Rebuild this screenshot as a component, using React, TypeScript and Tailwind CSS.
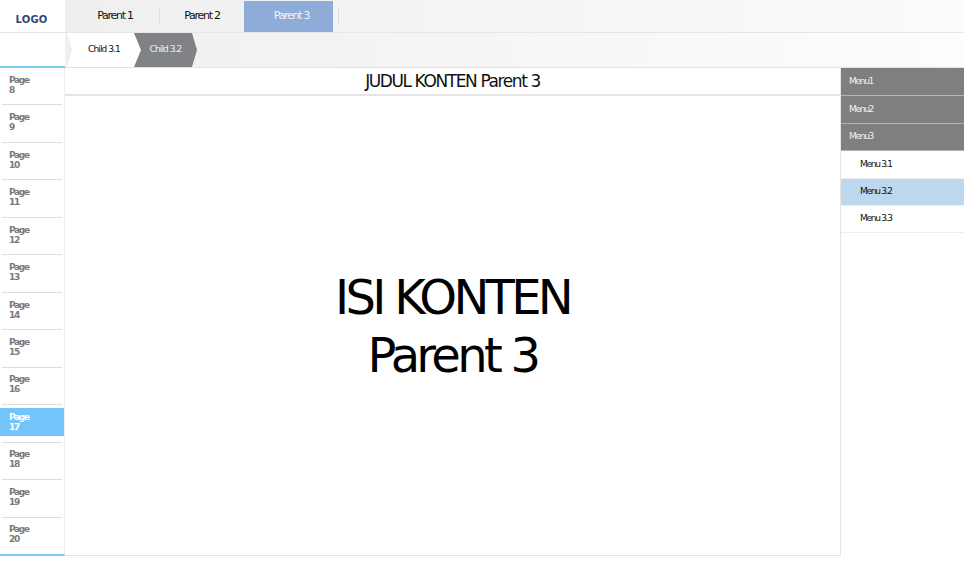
import React from 'react';

const pages = [8, 9, 10, 11, 12, 13, 14, 15, 16, 17, 18, 19, 20];
const activePage = 17;

const menus = [
  { label: 'Menu1', kind: 'top', h: 'h-[28px]' },
  { label: 'Menu2', kind: 'top', h: 'h-[28px]' },
  { label: 'Menu3', kind: 'top', h: 'h-[27px]' },
  { label: 'Menu 3.1', kind: 'sub', h: 'h-[28px]' },
  { label: 'Menu 3.2', kind: 'active', h: 'h-[27px]' },
  { label: 'Menu 3.3', kind: 'sub', h: 'h-[27px]' },
];

const Header: React.FC = () => (
  <>
    <div className="flex h-[33px] border-b border-[#e6e6e6]">
      <div className="w-[65px] bg-white flex items-center justify-center pt-[6px] pr-[2px] text-[10px] font-bold text-[#2b4a7b] tracking-[0.02em]">
        LOGO
      </div>
      <div className="flex-1 flex items-stretch pl-[6px] pt-[1px] bg-linear-to-r from-[#efefef] to-[#fbfbfb] text-[11px]">
        <div className="w-[88px] flex items-center justify-center text-[#111]">Parent 1</div>
        <div className="w-[1px] h-[17px] self-center bg-[#dddddd]" />
        <div className="w-[84px] flex items-center justify-center text-[#111]">Parent 2</div>
        <div className="w-[89px] flex items-center justify-center bg-[#8dacd8] text-[#f4f4f4] pl-[6px]">Parent 3</div>
        <div className="w-[1px] h-[17px] self-center bg-[#dddddd] ml-[5px]" />
      </div>
    </div>
    <div className="flex h-[35px]">
      <div className="w-[65px] bg-white border-b-2 border-[#7cc8f8]" />
      <div className="flex-1 flex bg-linear-to-r from-[#efefef] to-[#fdfdfd] border-b border-[#e2e2e2] pl-[2px] text-[9px] tracking-[-0.9px]">
        <div className="w-[74px] h-full bg-white flex items-center justify-center text-[#111] [clip-path:polygon(0_0,67px_0,74px_50%,67px_100%,0_100%,5px_50%)]">
          Child 3.1
        </div>
        <div className="w-[63px] -ml-[7px] h-full bg-[#818286] flex items-center justify-center text-[#f0f0f0] [clip-path:polygon(0_0,58px_0,63px_50%,58px_100%,0_100%,7px_50%)]">
          Child 3.2
        </div>
      </div>
    </div>
  </>
);

const LeftNav: React.FC = () => (
  <div className="w-[65px] flex flex-col border-r border-[#ececec] border-b-2 border-b-[#7cc8f8]">
    {pages.map((p, i) => (
      <React.Fragment key={p}>
        <div className="flex-1 flex items-center">
          <div
            className={
              'w-full h-[28px] mb-[3px] flex flex-col justify-center pl-[9px] text-[9px] leading-[10px] font-bold ' +
              (p === activePage ? 'bg-[#74c4fc] text-white' : 'text-[#7a7a7a]')
            }
          >
            <span>Page</span>
            <span>{p}</span>
          </div>
        </div>
        {i < pages.length - 1 && <div className="h-[1px] mx-[2px] bg-[#dcdcdc]" />}
      </React.Fragment>
    ))}
  </div>
);

const RightNav: React.FC = () => (
  <div className="w-[124px] flex flex-col border-l border-[#e6e6e6] text-[9px]">
    {menus.map((m) => (
      <div
        key={m.label}
        className={
          m.h +
          ' flex items-center border-b ' +
          (m.kind === 'top'
            ? 'bg-[#7f7f7f] text-[#f2f2f2] pl-[8px] border-[#b4b4b4]'
            : m.kind === 'active'
              ? 'bg-[#bdd7ee] text-[#111] pl-[19px] border-[#eeeeee]'
              : 'bg-white text-[#111] pl-[19px] border-[#eeeeee]')
        }
      >
        {m.label}
      </div>
    ))}
  </div>
);

export default function App() {
  return (
    <div className="w-[964px] h-[563px] bg-white flex flex-col overflow-hidden font-['DejaVu_Sans',sans-serif] tracking-[-1.28px]">
      <Header />
      <div className="flex h-[488px]">
        <LeftNav />
        <div className="flex-1 flex flex-col border-b border-[#e3e3e3]">
          <div className="h-[28px] flex items-center justify-center pt-[1px] border-b-2 border-[#e4e4e4] text-[17px] text-[#111] tracking-[-1.4px]">
            JUDUL KONTEN Parent 3
          </div>
          <div className="flex-1 flex items-center justify-center text-center text-[48px] leading-[58px] text-black tracking-[-3.7px]">
            <div>
              ISI KONTEN
              <br />
              Parent 3
            </div>
          </div>
        </div>
        <RightNav />
      </div>
    </div>
  );
}
